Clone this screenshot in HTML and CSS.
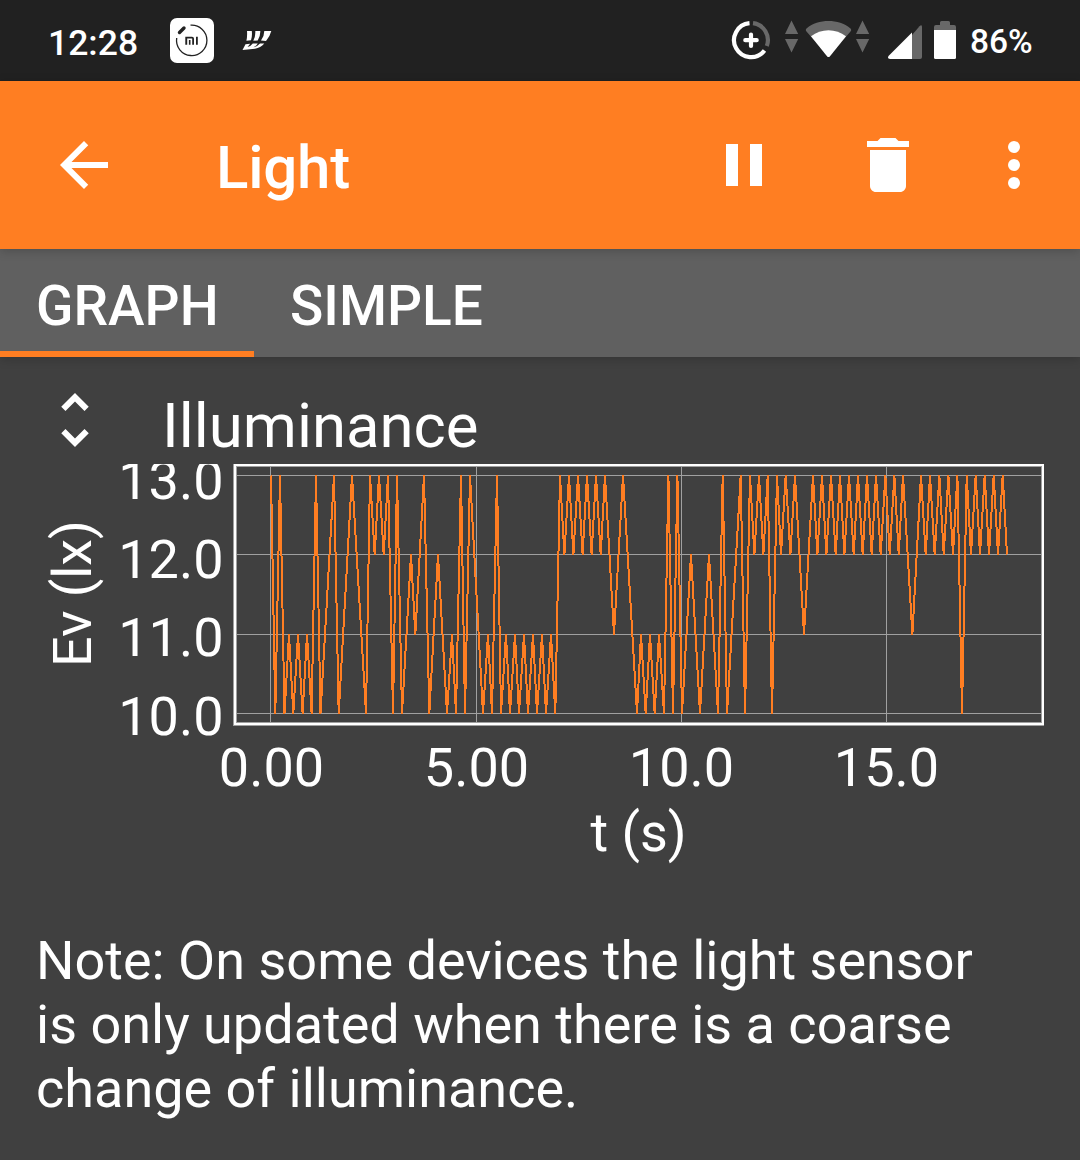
FILE: index.html
```html
<!DOCTYPE html>
<html lang="en">
<head>
<meta charset="utf-8">
<title>Light</title>
<link rel="stylesheet" href="styles.css">
</head>
<body>
<div class="status">
  <span class="clock">12:28</span>
  <svg class="icon-mi" width="46" height="46" viewBox="169 18 46 46">
    <rect x="170" y="18" width="44" height="45" rx="7" fill="#fff"/>
    <path d="M190.500 25.200A15.200 15.200 0 1 1 176.700 38" fill="none" stroke="#222" stroke-width="1.300"/>
    <path d="M179.500 32.500L184 28" stroke="#222" stroke-width="3.400" stroke-linecap="round"/>
    <path d="M185.300 44.700V36.800H192q2 0 2 2V44.700H192.200V38.500H187.200V44.700ZM188.900 40H190.500V44.700H188.900ZM196 36.800H197.800V44.700H196Z" fill="#222"/>
  </svg>
  <svg class="icon-sail" width="30" height="22" viewBox="242 30 30 22" fill="#fff">
    <path d="M247 31h4.800q.6 5-.8 9.200l-4.600.6q1-4.500.6-9.800ZM255.300 31h5q.2 5-2.600 9.500l-4.400.2q2.300-4.300 2-9.700ZM264.300 31h7q-1.300 5.500-5.300 9.900l-5-.4q3.300-4.300 3.300-9.500Z"/>
    <path d="M245.500 44.200l4.700-.5-2.700 3.300q3.500-.8 5.300-3.400l5-.1q-1.300 2.200-4.300 3.800 4-.9 6.500-3.800l4.300.1q-3.800 4.300-9.300 5.200L242.500 50Z"/>
  </svg>
  <svg class="icons-right" width="226" height="42" viewBox="731 20 226 42">
    <g fill="none" stroke-width="4.200">
      <path d="M749.500 23.200A17 17 0 1 0 764.500 50.500" stroke="#fff"/>
      <path d="M753 23.200A17 17 0 0 1 766.800 46" stroke="#686868"/>
      <path d="M751 34.500V46M745.300 40.200H756.700" stroke="#fff" stroke-linecap="round"/>
    </g>
    <g fill="#686868">
      <path d="M791.500 20.500L798.200 34H785ZM785 39H798.200L791.500 52.500Z"/>
      <path d="M862.500 20.500L869.200 34H856ZM856 39H869.200L862.500 52.500Z"/>
      <path d="M806.500 31.500Q805 29.700 806.800 28.200C818 18.700 839 18.700 850.200 28.200Q852 29.700 850.500 31.500L828.500 57Z"/>
      <path d="M912 35L919.500 26.200Q922 23.800 922 27V57Q922 59 920 59H912Z"/>
      <path d="M934 31V27Q934 25 936 25H940V22.500Q940 21 941.500 21H948.500Q950 21 950 22.500V25H954Q956 25 956 27V31Z"/>
    </g>
    <g fill="#fff">
      <path d="M811 36.300C821 28.300 836 28.300 846 36.300L830 56.200Q828.500 58 827 56.200Z"/>
      <path d="M912 32.500V59H890Q886.500 58.500 889 55.500Z"/>
      <path d="M934 30H956V57.500Q956 59 954.500 59H935.500Q934 59 934 57.500Z"/>
    </g>
  </svg>
  <span class="charge">86%</span>
</div>

<header class="toolbar">
  <svg class="icon" viewBox="0 0 24 24"><path d="M20 11H7.830l5.590-5.590L12 4l-8 8 8 8 1.410-1.410L7.830 13H20z"/></svg>
  <h1 class="title">Light</h1>
  <div class="actions">
    <svg class="icon" viewBox="0 0 24 24"><path d="M6 19h4V5H6zM14 5v14h4V5z"/></svg>
    <svg class="icon" viewBox="0 0 24 24"><path d="M6 19c0 1.100.9 2 2 2h8c1.100 0 2-.9 2-2V7H6zM19 4h-3.500l-1-1h-5l-1 1H5v2h14z"/></svg>
    <svg class="icon more" viewBox="0 0 24 24"><circle cx="12" cy="6" r="2"/><circle cx="12" cy="12" r="2"/><circle cx="12" cy="18" r="2"/></svg>
  </div>
</header>

<nav class="tabs">
  <a class="tab active">GRAPH</a>
  <a class="tab">SIMPLE</a>
</nav>

<main class="content">
  <div class="graph-head">
    <svg class="icon" viewBox="0 0 24 24"><path d="M12 5.830L15.170 9l1.410-1.410L12 3 7.410 7.590 8.830 9zM12 18.170L8.830 15l-1.410 1.410L12 21l4.590-4.590L15.170 15z"/></svg>
    <h2 class="graph-title">Illuminance</h2>
  </div>
  <svg class="chart" width="1044" height="416" viewBox="0 464 1044 416">
    <g shape-rendering="crispEdges" fill="none">
      <path stroke="#a0a0a0" d="M236 475.500H1042M236 554.500H1042M236 634.500H1042M236 713.500H1042M270.500 466V723M476.500 466V723M681.500 466V723M886.500 466V723"/>
      <rect x="235" y="465" width="808" height="259" stroke="#a0a0a0" stroke-width="4"/>
      <rect x="235" y="465" width="808" height="259" stroke="#fff" stroke-width="2"/>
    </g>
    <path id="series" class="series" shape-rendering="crispEdges"/>
    <g class="ticks" text-anchor="end">
      <text x="223.500" y="499">13.0</text>
      <text x="223.500" y="578">12.0</text>
      <text x="223.500" y="656">11.0</text>
      <text x="223.500" y="735">10.0</text>
    </g>
    <g class="ticks" text-anchor="middle">
      <text x="271.500" y="786">0.00</text>
      <text x="476.500" y="786">5.00</text>
      <text x="681.500" y="786">10.0</text>
      <text x="886.500" y="786">15.0</text>
      <text x="638.500" y="851">t (s)</text>
      <text transform="translate(91 593.500) rotate(-90)">Ev (lx)</text>
    </g>
  </svg>
  <p class="note">Note: On some devices the light sensor<br>is only updated when there is a coarse<br>change of illuminance.</p>
</main>
<script src="chart.js"></script>
</body>
</html>
```
FILE: styles.css
```css
* { box-sizing: border-box; }

body {
  margin: 0;
  width: 1080px;
  height: 1160px;
  overflow: hidden;
  background: #404040;
  color: #fff;
  font-family: Roboto, "Liberation Sans", sans-serif;
}

svg { display: block; flex: none; }

.status {
  height: 81px;
  background: #212121;
  display: flex;
  align-items: flex-start;
  padding-left: 48px;
  font-weight: 500;
}

.clock { font-size: 35.5px; line-height: 42px; padding-top: 22px; width: 121px; }
.icon-mi { margin-top: 18px; }
.icon-sail { margin: 30px 0 0 27px; }
.icons-right { margin: 20px 0 0 459px; }
.charge { font-size: 33.5px; line-height: 40px; padding-top: 22px; margin-left: 13px; }

.toolbar {
  position: relative;
  z-index: 2;
  height: 168px;
  background: #ff7e22;
  display: flex;
  align-items: center;
  padding: 0 30px 0 48px;
  box-shadow: 0 2px 10px rgba(0, 0, 0, .2);
}

.icon { width: 72px; height: 72px; fill: #fff; }
.title { margin: 5px 0 0 96px; font-size: 60px; line-height: 70px; font-weight: 500; letter-spacing: -.2px; }
.actions { margin-left: auto; display: flex; gap: 72px; }
.more { margin-left: -18px; }

.tabs {
  position: relative;
  z-index: 1;
  height: 108px;
  background: #606060;
  display: flex;
  box-shadow: 0 2px 10px rgba(0, 0, 0, .2);
}

.tab { padding: 23px 36px 0; font-size: 55px; line-height: 68px; font-weight: 500; }
.active { width: 254px; border-bottom: 6px solid #ff7e22; }

.graph-head { height: 107px; display: flex; padding: 27px 0 0 39px; }
.graph-title { margin: 6px 0 0 51px; font-size: 61.700px; line-height: 72px; font-weight: 400; }

.series { fill: none; stroke: #ff7e22; stroke-width: 2; }
.ticks { fill: #fff; font-size: 54px; }

.note { margin: 49px 0 0 36px; font-size: 54px; line-height: 64px; white-space: nowrap; }
```
FILE: chart.js
```js
// Horizontal plot position followed by the reading in lux.
const samples = `271,13 275.3,10 280,13 284.5,10 289,11 293.3,10 298,11 302.6,10 307,11 311.6,10
316,13 320.5,10 334,13 338.7,10 352,13 366,10 370,13 374.7,12 379,13 383.7,12 388,13 393,10 397,13
402,10 411,12 415.3,11 424,13 429.3,10 438,12 447,10 452,11 456,10 461,13 465,10 470,13 483,10
488,11 492,10 497,13 501,10 506,11 510,10 515,11 519,10 524,11 528,10 533,11 537,10 542,11 546,10
551,11 555.3,10 560,13 564.4,12 569,13 573.4,12 578,13 582.6,12 587,13 591.6,12 596,13 600.7,12
605,13 614,11 623,13 637,10 641,11 645.7,10 650,11 654.7,10 659,11 664,10 668.4,13 673,10 677.4,13
682,10 691,12 700,10 709,12 718,10 722.7,13 727,10 740.7,13 745,10 750,13 754.4,12 759,13 763.4,12
767.7,13 772,10 777,13 781,12 785.7,13 790.4,12 795,13 804,11 813,13 817.4,12 822,13 826.4,12
831,13 835.7,12 840,13 844.4,12 849,13 853.7,12 858,13 862.7,12 867,13 871.7,12 876,13 880.7,12
885.4,13 889.7,12 894.4,13 898.7,12 903,13 912.4,11 921,13 925.7,12 930,13 934.7,12 939.4,13
943.7,12 948.4,13 953,12 957.4,13 962,10 966.7,13 971,12 975.7,13 980,12 984.7,13 989,12
993.7,13 998,12 1002.7,13 1007,12`;
const rows = { 10: 713.5, 11: 634.5, 12: 554.5, 13: 475.5 };
const points = samples.trim().split(/\s+/).map(s => {
  const [x, lux] = s.split(",");
  return `${x} ${rows[lux]}`;
});
const series = document.getElementById("series");
series.setAttribute("d", "M" + points.join("L"));
series.setAttribute("stroke-linejoin", "bevel");
```
